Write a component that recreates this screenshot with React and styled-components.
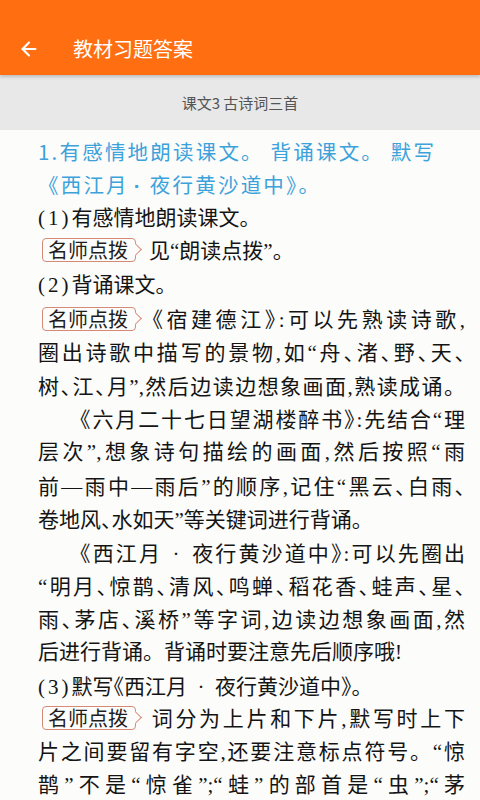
import React from "react";
import styled, { createGlobalStyle } from "styled-components";
import { ArrowLeft } from "lucide-react";

const Global = createGlobalStyle`
  html, body {
    margin: 0;
    padding: 0;
    background: #fcfcfa;
  }
  body {
    font-family: "Noto Sans CJK SC", "Noto Sans", sans-serif;
  }
`;

const DOT = "\u2002·\u2002";

const lines = [
  { kind: "title", text: "1.有感情地朗读课文。 背诵课文。 默写" },
  { kind: "title", text: "《西江月", dot: true, rest: "夜行黄沙道中》。" },
  { num: "(1)", text: "有感情地朗读课文。" },
  { badge: true, text: "见“朗读点拨”。" },
  { num: "(2)", text: "背诵课文。" },
  { badge: true, text: "《宿建德江》:可以先熟读诗歌,", full: true },
  { text: "圈出诗歌中描写的景物,如“舟、渚、野、天、", full: true },
  { text: "树、江、月”,然后边读边想象画面,熟读成诵。", full: true },
  { text: "《六月二十七日望湖楼醉书》:先结合“理", full: true, indent: true },
  { text: "层次”,想象诗句描绘的画面,然后按照“雨", full: true },
  { text: "前—雨中—雨后”的顺序,记住“黑云、白雨、", full: true },
  { text: "卷地风、水如天”等关键词进行背诵。" },
  { text: `《西江月${DOT}夜行黄沙道中》:可以先圈出`, full: true, indent: true },
  { text: "“明月、惊鹊、清风、鸣蝉、稻花香、蛙声、星、", full: true },
  { text: "雨、茅店、溪桥”等字词,边读边想象画面,然", full: true },
  { text: "后进行背诵。背诵时要注意先后顺序哦!" },
  { num: "(3)", text: `默写《西江月${DOT}夜行黄沙道中》。` },
  { badge: true, text: "词分为上片和下片,默写时上下", full: true },
  { text: "片之间要留有字空,还要注意标点符号。“惊", full: true },
  { text: "鹊”不是“惊雀”;“蛙”的部首是“虫”;“茅", full: true },
];

// 、《》 are set half width, like the printed page
function renderText(text) {
  return text.split(/([、《》])/).map((part, i) =>
    /^[、《》]$/.test(part) ? <Tight key={i}>{part}</Tight> : part
  );
}

function App() {
  return (
    <Page>
      <Global />
      <TopBar>
        <BackButton>
          <ArrowLeft size={22} strokeWidth={2.4} />
        </BackButton>
        <Title>教材习题答案</Title>
      </TopBar>
      <LessonBar>课文3 古诗词三首</LessonBar>
      <Sheet lang="zh-CN">
        {lines.map((l, i) =>
          l.kind === "title" ? (
            <Heading key={i}>
              {l.text}
              {l.dot && <MidDot>·</MidDot>}
              {l.rest}
            </Heading>
          ) : (
            <Line key={i} $full={l.full} $indent={l.indent}>
              {l.badge && <Badge>名师点拨</Badge>}
              {l.num && <Num>{l.num}</Num>}
              {renderText(l.text)}
            </Line>
          )
        )}
      </Sheet>
    </Page>
  );
}

const Page = styled.div`
  width: 480px;
  height: 800px;
  overflow: hidden;
  display: flex;
  flex-direction: column;
  background: #fcfcfa;
`;

const TopBar = styled.header`
  height: 75px;
  box-sizing: border-box;
  padding-top: 22px;
  flex-shrink: 0;
  display: flex;
  align-items: center;
  background: #ff6f12;
  box-shadow: 0 2px 3px rgba(0, 0, 0, 0.18);
  position: relative;
  z-index: 1;
`;

const BackButton = styled.div`
  width: 58px;
  display: flex;
  justify-content: center;
  color: #fff;
`;

const Title = styled.h1`
  margin: 0 0 0 15px;
  font-size: 20px;
  font-weight: 400;
  color: #fff;
`;

const LessonBar = styled.div`
  height: 55px;
  flex-shrink: 0;
  display: flex;
  align-items: center;
  justify-content: center;
  background: #e8e8e8;
  color: #555;
  font-size: 15px;
`;

const Sheet = styled.div`
  padding: 5px 15px 0 38px;
`;

const Heading = styled.div`
  height: 33.4px;
  line-height: 33.4px;
  white-space: nowrap;
  font-family: "Noto Sans CJK SC", sans-serif;
  font-size: 20.5px;
  letter-spacing: 2.2px;
  color: #3ca2db;
`;

const MidDot = styled.span`
  font-family: "Liberation Sans", sans-serif;
  font-weight: 700;
  margin: 0 7px 0 5px;
`;

const Line = styled.div`
  height: 33.4px;
  line-height: 33.4px;
  white-space: nowrap;
  font-family: "Liberation Serif", "Noto Sans CJK SC", serif;
  font-size: 21px;
  color: #141414;
  padding-left: ${(p) => (p.$indent ? "42px" : "0")};
  text-align: justify;
  text-align-last: ${(p) => (p.$full ? "justify" : "left")};
`;

const Tight = styled.span`
  font-family: "Noto Sans CJK SC", sans-serif;
  font-feature-settings: "halt";
`;

const Num = styled.span`
  letter-spacing: 3px;
`;

const Badge = styled.span`
  position: relative;
  display: inline-block;
  height: 22px;
  line-height: 22px;
  padding: 0 7px 0 5px;
  margin: 0 13px 0 4px;
  border: 1px solid #d58a78;
  border-radius: 4px;
  font-family: "Noto Sans CJK SC", sans-serif;
  font-size: 20px;
  color: #1e1e1e;
  text-align-last: left;

  &::after {
    content: "";
    position: absolute;
    right: -5px;
    top: 50%;
    width: 8px;
    height: 8px;
    margin-top: -5px;
    background: #fcfcfa;
    border-top: 1px solid #d58a78;
    border-right: 1px solid #d58a78;
    transform: rotate(45deg);
  }
`;

export default App;
